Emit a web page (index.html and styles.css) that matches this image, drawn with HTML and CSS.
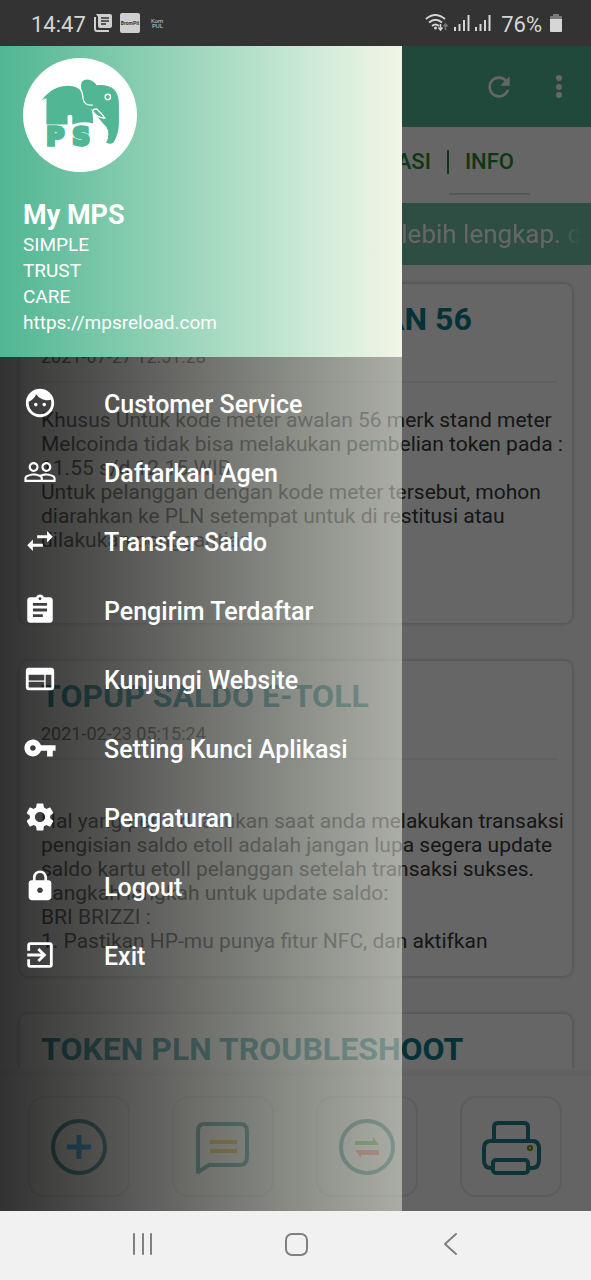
FILE: index.html
```
<!DOCTYPE html>
<html lang="id">
<head>
    <meta charset="UTF-8">
    <meta name="viewport" content="width=device-width, initial-scale=1.0">
    <title>My MPS</title>
    <link rel="stylesheet" href="styles.css">
</head>
<body>
    <header class="status-bar">
        <span class="status-text">14:47</span>
        <svg class="status-icon" width="18" height="18" viewBox="0 0 18 18">
            <path d="M1 3v12q0 2 2 2h12" fill="none" stroke="#cfcfcf" stroke-width="2"/>
            <path d="M2 0h14q2 0 2 2v10q0 2-2 2H6q-2 0-2-2V3z" fill="#cfcfcf"/>
            <path d="M7 4h8M7 7h8M7 10h5" stroke="#333" stroke-width="1.5"/>
        </svg>
        <svg class="status-icon" width="20" height="20" viewBox="0 0 20 20">
            <rect width="20" height="20" rx="2" fill="#cfcfcf"/>
            <text x="10" y="12" text-anchor="middle" class="tiny-label">BromPit</text>
        </svg>
        <svg class="status-icon status-last" width="13" height="14" viewBox="0 0 13 14">
            <text x="0" y="7" class="tiny-mark">Kom</text>
            <text x="1" y="12" class="tiny-mark">PUL</text>
        </svg>
        <svg class="status-signals" width="68" height="18" viewBox="0 0 68 18">
            <g fill="none" stroke="#d6d6d6" stroke-width="1.8">
                <path d="M1 5Q10-3 20 5M4 8.500q6.500-5.500 13 0M7 12q3.500-3 7 0"/>
            </g>
            <circle cx="10.500" cy="14" r="1.500" fill="#d6d6d6"/>
            <path d="M15.500 10v5M13.500 13.500l2 2.500 2-2.500" fill="none" stroke="#d6d6d6" stroke-width="1.500"/>
            <path d="M20.500 16v-5M18.500 12.500l2-2.500 2 2.500" fill="none" stroke="#777" stroke-width="1.500"/>
            <path d="M30 17v-4M34.500 17v-7M39 17V6M43.500 17V1M51 17v-4M55.500 17v-7M60 17V6M64.500 17V1" stroke="#d6d6d6" stroke-width="2"/>
        </svg>
        <span class="status-text">76%</span>
        <svg class="status-icon" width="12" height="18" viewBox="0 0 12 18">
            <path d="M3 0h6v2h2q1 0 1 1v3H0V3q0-1 1-1h2z" fill="#7a7a7a"/>
            <path d="M0 5h12v12q0 1-1 1H1q-1 0-1-1z" fill="#d6d6d6"/>
        </svg>
    </header>

    <div class="screen">
        <main class="app">
            <div class="toolbar">
                <button class="icon-button" aria-label="Refresh">
                    <svg width="32" height="32" viewBox="0 0 24 24" fill="#fff"><path d="M17.650 6.350C16.200 4.900 14.210 4 12 4c-4.420 0-7.990 3.580-7.990 8s3.570 8 7.990 8c3.730 0 6.840-2.550 7.730-6h-2.080c-.82 2.330-3.040 4-5.650 4-3.310 0-6-2.690-6-6s2.690-6 6-6c1.660 0 3.140.69 4.220 1.780L13 11h7V4l-2.350 2.350z"/></svg>
                </button>
                <button class="icon-button" aria-label="Menu">
                    <svg width="32" height="32" viewBox="0 0 32 32" fill="#fff"><circle cx="16" cy="7" r="3"/><circle cx="16" cy="16" r="3"/><circle cx="16" cy="24" r="3"/></svg>
                </button>
            </div>

            <nav class="tabs">
                <a class="tab" href="#">REGISTRASI</a>
                <a class="tab tab-active" href="#">INFO</a>
            </nav>

            <div class="ticker"><span>Buka menu INFO untuk lebih lengkap. c</span></div>

            <div class="cards">
                <article class="card">
                    <h2>PENTING METER AWALAN 56</h2>
                    <time>2021-07-27 12:51:28</time>
                    <p>Khusus Untuk kode meter awalan 56 merk stand meter<br>Melcoinda tidak bisa melakukan pembelian token pada :<br>11.55 s/d 12.15 WIB<br>Untuk pelanggan dengan kode meter tersebut, mohon<br>diarahkan ke PLN setempat untuk di restitusi atau<br>dilakukan penggantian<br><br><br></p>
                </article>
                <article class="card">
                    <h2>TOPUP SALDO E-TOLL</h2>
                    <time>2021-02-23 05:15:24</time>
                    <p><br>Hal yang perlu dilakukan saat anda melakukan transaksi<br>pengisian saldo etoll adalah jangan lupa segera update<br>saldo kartu etoll pelanggan setelah transaksi sukses.<br>Langkah langkah untuk update saldo:<br>BRI BRIZZI :<br>1. Pastikan HP-mu punya fitur NFC, dan aktifkan</p>
                </article>
                <article class="card">
                    <h2>TOKEN PLN TROUBLESHOOT</h2>
                    <p><br><br></p>
                </article>
            </div>

            <div class="actions">
                <button class="action" aria-label="Topup">
                    <svg width="60" height="60" viewBox="0 0 60 60" fill="none" stroke="#237f88" stroke-width="4">
                        <circle cx="30" cy="30" r="26"/>
                        <path d="M30 18v24M18 30h24" stroke="#1ca4e8" stroke-width="5"/>
                    </svg>
                </button>
                <button class="action" aria-label="Chat">
                    <svg width="60" height="60" viewBox="0 0 60 60" fill="none" stroke="#237f88" stroke-width="4" stroke-linejoin="round">
                        <path d="M11 7h36q7 0 7 7v26q0 8-8 8H16L5 55V14q0-7 6-7z"/>
                        <path d="M17 25h27M17 34h27" stroke="#e0b400"/>
                    </svg>
                </button>
                <button class="action" aria-label="Transfer">
                    <svg width="60" height="60" viewBox="0 0 60 60" fill="none" stroke="#237f88" stroke-width="4">
                        <circle cx="30" cy="30" r="26"/>
                        <path d="M18 24h18v-4l6 8H18z" fill="#43c51f" stroke="none"/>
                        <path d="M42 38H24v3l-6-8h24z" fill="#ff6b57" stroke="none"/>
                    </svg>
                </button>
                <button class="action" aria-label="Printer">
                    <svg width="60" height="60" viewBox="0 0 60 60" fill="none" stroke="#237f88" stroke-width="4">
                        <path d="M13 24V10q0-4 4-4h26q4 0 4 4v14"/>
                        <path d="M12 51h-2q-7 0-7-8V31q0-7 7-7h41q7 0 7 7v12q0 8-7 8h-3"/>
                        <rect x="12" y="43" width="35" height="13" rx="3"/>
                        <circle cx="49" cy="31" r="2" stroke="#7a8a00" stroke-width="2"/>
                    </svg>
                </button>
            </div>
        </main>

        <div class="scrim"></div>

        <aside class="drawer">
            <div class="drawer-head">
                <svg class="logo" viewBox="42 24 340 340">
                    <circle cx="212" cy="194" r="170" fill="#fff"/>
                    <g fill="#50b693">
                        <path d="M96 152Q106 137 120 127Q145 106 178 107Q205 108 219 127L246 178Q251 185 251 219Q220 211 189 222V196Q182 190 175 196V222H112V144Q104 145 96 152z"/>
                        <path d="M216 118Q210 88 233 88Q252 90 262 105Q328 100 328 160V220Q327 252 312 276Q302 283 290 276Q298 264 296 240Q282 222 254 186L236 166Q222 145 216 118z"/>
                        <text x="112" y="285" class="logo-text">P</text>
                        <text x="190" y="285" class="logo-text">S</text>
                    </g>
                    <g fill="none" stroke="#fff" stroke-width="4">
                        <path d="M213 116Q221 128 221 144Q225 168 250 164"/>
                        <circle cx="295" cy="140" r="8"/>
                        <path d="M251 186Q247 176 262 176Q275 187 286 203Q267 204 251 186z"/>
                        <path d="M252 193Q268 207 292 234" stroke-width="3"/>
                    </g>
                </svg>
                <h1>My MPS</h1>
                <p>SIMPLE<br>TRUST<br>CARE<br>https://mpsreload.com</p>
            </div>
            <nav class="menu">
                <a class="menu-item" href="#">
                    <svg viewBox="0 0 24 24"><path d="M9 11.750c-.69 0-1.250.56-1.250 1.250s.56 1.250 1.250 1.250 1.250-.56 1.250-1.250-.56-1.250-1.250-1.250zm6 0c-.69 0-1.250.56-1.250 1.250s.56 1.250 1.250 1.250 1.250-.56 1.250-1.250-.56-1.250-1.250-1.250zM12 2C6.480 2 2 6.480 2 12s4.480 10 10 10 10-4.480 10-10S17.520 2 12 2zm0 18c-4.410 0-8-3.590-8-8 0-.29.02-.58.05-.86 2.360-1.050 4.230-2.980 5.210-5.370C11.070 8.330 14.050 10 17.420 10c.78 0 1.530-.09 2.250-.26.21.71.33 1.470.33 2.260 0 4.410-3.590 8-8 8z"/></svg>
                    Customer Service
                </a>
                <a class="menu-item" href="#">
                    <svg viewBox="0 0 24 24"><path d="M16.500 13c-1.200 0-3.070.34-4.500 1-1.430-.67-3.300-1-4.500-1C5.330 13 1 14.080 1 16.250V19h22v-2.750c0-2.170-4.330-3.250-6.500-3.250zm-4 4.500h-10v-1.250c0-.54 2.560-1.750 5-1.750s5 1.210 5 1.750v1.250zm9 0H14v-1.250c0-.46-.2-.86-.52-1.220.88-.3 1.960-.53 3.020-.53 2.440 0 5 1.210 5 1.750v1.250zM7.500 12c1.930 0 3.500-1.570 3.500-3.500S9.430 5 7.500 5 4 6.570 4 8.500 5.570 12 7.500 12zm0-5.500c1.100 0 2 .9 2 2s-.9 2-2 2-2-.9-2-2 .9-2 2-2zm9 5.500c1.930 0 3.500-1.570 3.500-3.500S18.430 5 16.500 5 13 6.570 13 8.500s1.570 3.500 3.500 3.500zm0-5.500c1.100 0 2 .9 2 2s-.9 2-2 2-2-.9-2-2 .9-2 2-2z"/></svg>
                    Daftarkan Agen
                </a>
                <a class="menu-item" href="#">
                    <svg viewBox="0 0 24 24"><path d="M6.990 11L3 15l3.990 4v-3H14v-2H6.990v-3zM21 9l-3.990-4v3H10v2h7.010v3L21 9z"/></svg>
                    Transfer Saldo
                </a>
                <a class="menu-item" href="#">
                    <svg viewBox="0 0 24 24"><path d="M19 3h-4.180C14.400 1.840 13.300 1 12 1c-1.300 0-2.400.84-2.820 2H5c-1.100 0-2 .9-2 2v14c0 1.100.9 2 2 2h14c1.100 0 2-.9 2-2V5c0-1.100-.9-2-2-2zm-7 0c.55 0 1 .45 1 1s-.45 1-1 1-1-.45-1-1 .45-1 1-1zm2 14H7v-2h7v2zm3-4H7v-2h10v2zm0-4H7V7h10v2z"/></svg>
                    Pengirim Terdaftar
                </a>
                <a class="menu-item" href="#">
                    <svg viewBox="0 0 24 24"><path d="M20 4H4c-1.100 0-1.990.9-1.990 2L2 18c0 1.100.9 2 2 2h16c1.100 0 2-.9 2-2V6c0-1.100-.9-2-2-2zm-5 14H4v-4h11v4zm0-5H4V9h11v4zm5 5h-4V9h4v9z"/></svg>
                    Kunjungi Website
                </a>
                <a class="menu-item" href="#">
                    <svg viewBox="0 0 24 24"><path d="M12.650 10C11.830 7.670 9.610 6 7 6c-3.310 0-6 2.690-6 6s2.690 6 6 6c2.610 0 4.830-1.670 5.650-4H17v4h4v-4h2v-4H12.650zM7 14c-1.100 0-2-.9-2-2s.9-2 2-2 2 .9 2 2-.9 2-2 2z"/></svg>
                    Setting Kunci Aplikasi
                </a>
                <a class="menu-item" href="#">
                    <svg viewBox="0 0 24 24"><path d="M19.140 12.940c.04-.3.060-.61.060-.94 0-.32-.02-.64-.07-.94l2.030-1.580c.18-.14.23-.41.12-.61l-1.920-3.320c-.12-.22-.37-.29-.59-.22l-2.390.96c-.5-.38-1.030-.7-1.620-.94l-.36-2.540c-.04-.24-.24-.41-.48-.41h-3.840c-.24 0-.43.17-.47.41l-.36 2.540c-.59.24-1.130.57-1.620.94l-2.390-.96c-.22-.08-.47 0-.59.22L2.740 8.870c-.12.21-.08.47.12.61l2.030 1.580c-.05.3-.09.63-.09.94s.02.64.07.94l-2.030 1.580c-.18.14-.23.41-.12.61l1.920 3.320c.12.22.37.29.59.22l2.390-.96c.5.38 1.030.7 1.620.94l.36 2.540c.05.24.24.41.48.41h3.840c.24 0 .44-.17.47-.41l.36-2.540c.59-.24 1.130-.56 1.620-.94l2.390.96c.22.08.47 0 .59-.22l1.920-3.320c.12-.22.07-.47-.12-.61l-2.010-1.580zM12 15.600c-1.980 0-3.600-1.620-3.600-3.600s1.620-3.600 3.600-3.600 3.600 1.620 3.600 3.600-1.620 3.600-3.600 3.600z"/></svg>
                    Pengaturan
                </a>
                <a class="menu-item" href="#">
                    <svg viewBox="0 0 24 24"><path d="M18 8h-1V6c0-2.760-2.240-5-5-5S7 3.240 7 6v2H6c-1.100 0-2 .9-2 2v10c0 1.100.9 2 2 2h12c1.100 0 2-.9 2-2V10c0-1.100-.9-2-2-2zm-6 9c-1.100 0-2-.9-2-2s.9-2 2-2 2 .9 2 2-.9 2-2 2zm3.100-9H8.900V6c0-1.710 1.390-3.100 3.100-3.100 1.710 0 3.100 1.390 3.100 3.100v2z"/></svg>
                    Logout
                </a>
                <a class="menu-item" href="#">
                    <svg viewBox="0 0 24 24"><path d="M10.090 15.590L11.500 17l5-5-5-5-1.410 1.410L12.670 11H3v2h9.670l-2.580 2.590zM19 3H5c-1.110 0-2 .9-2 2v4h2V5h14v14H5v-4H3v4c0 1.100.89 2 2 2h14c1.100 0 2-.9 2-2V5c0-1.100-.9-2-2-2z"/></svg>
                    Exit
                </a>
            </nav>
        </aside>
    </div>

    <footer class="nav-bar">
        <button class="nav-button" aria-label="Recent apps">
            <svg width="26" height="26" viewBox="0 0 26 26"><path d="M5 3v20M14 3v20M22 3v20"/></svg>
        </button>
        <button class="nav-button" aria-label="Home">
            <svg width="26" height="26" viewBox="0 0 26 26"><rect x="3" y="3" width="21" height="21" rx="6"/></svg>
        </button>
        <button class="nav-button" aria-label="Back">
            <svg width="26" height="26" viewBox="0 0 26 26"><path d="M19 3L8 13l11 10"/></svg>
        </button>
    </footer>
</body>
</html>
```
FILE: styles.css
```
* {
    box-sizing: border-box;
}
body {
    display: flex;
    flex-direction: column;
    height: 100vh;
    margin: 0;
    font-family: Roboto, "Liberation Sans", sans-serif;
    background-color: #fafafa;
}
h1, h2, p {
    margin: 0;
}
button {
    padding: 0;
    border: none;
    background: none;
    cursor: pointer;
}
a {
    text-decoration: none;
}
svg {
    display: block;
}

/* Status bar */
.status-bar {
    display: flex;
    align-items: center;
    gap: 8px;
    height: 46px;
    padding: 0 29px 0 31px;
    background-color: #333;
}
.status-text {
    font-size: 22px;
    line-height: 26px;
    color: #d6d6d6;
    margin-top: 3px;
}
.status-last {
    margin-left: 3px;
}
.status-signals {
    margin-left: auto;
}
.tiny-label {
    font-size: 5px;
    font-weight: bold;
    fill: #333;
}
.tiny-mark {
    font-size: 6px;
    fill: #cfcfcf;
}

/* App behind the drawer */
.screen {
    position: relative;
    flex: 1;
    min-height: 0;
}
.app {
    display: flex;
    flex-direction: column;
    height: 100%;
}
.toolbar {
    display: flex;
    align-items: center;
    justify-content: flex-end;
    gap: 28px;
    height: 81px;
    padding: 0 16px;
    background-color: #50b693;
}
.tabs {
    display: flex;
    align-items: center;
    justify-content: flex-end;
    height: 76px;
    padding: 0 61px 0 0;
    background-color: #fff;
    overflow: hidden;
}
.tab {
    position: relative;
    padding: 0 16px;
    font-size: 22px;
    font-weight: 500;
    line-height: 24px;
    color: #2a8a35;
    margin-bottom: 6px;
}
.tab-active {
    border-left: 2px solid #2a8a35;
}
.tab-active::after {
    content: "";
    position: absolute;
    left: 0;
    right: 0;
    bottom: -21px;
    height: 2px;
    background-color: #d0dedb;
}
.ticker {
    display: flex;
    justify-content: flex-end;
    align-items: center;
    height: 62px;
    padding-right: 10px;
    background-color: #76c3a8;
    font-size: 26px;
    color: #fff;
    white-space: nowrap;
    overflow: hidden;
}
.ticker span {
    mask-image: linear-gradient(to left, transparent, #000 24px);
}
.cards {
    display: flex;
    flex-direction: column;
    gap: 38px;
    flex: 1;
    min-height: 0;
    padding: 19px 19px 0 20px;
    overflow: hidden;
}
.card {
    flex: none;
    padding: 16px 15px 23px 21px;
    border-radius: 8px;
    background-color: #fff;
    box-shadow: 0 0 4px rgba(0, 0, 0, 0.3);
}
.card h2 {
    font-size: 32px;
    line-height: 38px;
    color: #0b7d8a;
}
.card time {
    display: block;
    margin-bottom: 25px;
    padding: 9px 0 14px;
    border-bottom: 2px solid #f0f0f0;
    font-size: 18px;
    line-height: 20px;
    color: #555;
}
.card p {
    font-size: 21px;
    line-height: 24px;
    color: #383838;
    white-space: nowrap;
}
.actions {
    display: flex;
    justify-content: space-between;
    padding: 28px 29px 14px 28px;
    background: linear-gradient(#fafafa, #eee 7px, #fafafa 8px);
}
.action {
    display: flex;
    align-items: center;
    justify-content: center;
    width: 102px;
    height: 101px;
    border: 2px solid #e6e6e6;
    border-radius: 16px;
}

.scrim {
    position: absolute;
    inset: 0;
    background-color: rgba(0, 0, 0, 0.6);
}

/* Drawer */
.drawer {
    position: absolute;
    inset: 0 auto 0 0;
    width: 68%;
    background: linear-gradient(to right, rgba(0, 0, 0, 0.5), rgba(240, 245, 230, 0.5));
}
.drawer-head {
    padding: 12px 23px 21px;
    background: linear-gradient(to right, #50b693, #d9efdc 85%, #f1f5e6);
    color: #fff;
}
.logo {
    width: 114px;
    height: 114px;
    margin-bottom: 26px;
}
.logo-text {
    font-family: "DejaVu Sans", sans-serif;
    font-size: 72px;
    font-weight: bold;
    stroke: #50b693;
    stroke-width: 10px;
}
.drawer-head h1 {
    font-size: 27px;
    line-height: 34px;
}
.drawer-head p {
    font-size: 19px;
    line-height: 26px;
}
.menu {
    padding-top: 13px;
}
.menu-item {
    display: flex;
    align-items: center;
    gap: 47px;
    height: 69px;
    padding: 0 23px;
    font-size: 25px;
    font-weight: 500;
    color: #fff;
}
.menu-item svg {
    width: 34px;
    height: 34px;
    margin-bottom: 4px;
    fill: #fff;
}

/* System navigation */
.nav-bar {
    display: flex;
    justify-content: center;
    gap: 128px;
    height: 69px;
    padding-bottom: 3px;
    background-color: #f1f1f1;
}
.nav-button svg {
    fill: none;
    stroke: #808080;
    stroke-width: 2px;
    stroke-linecap: round;
    stroke-linejoin: round;
}
```
